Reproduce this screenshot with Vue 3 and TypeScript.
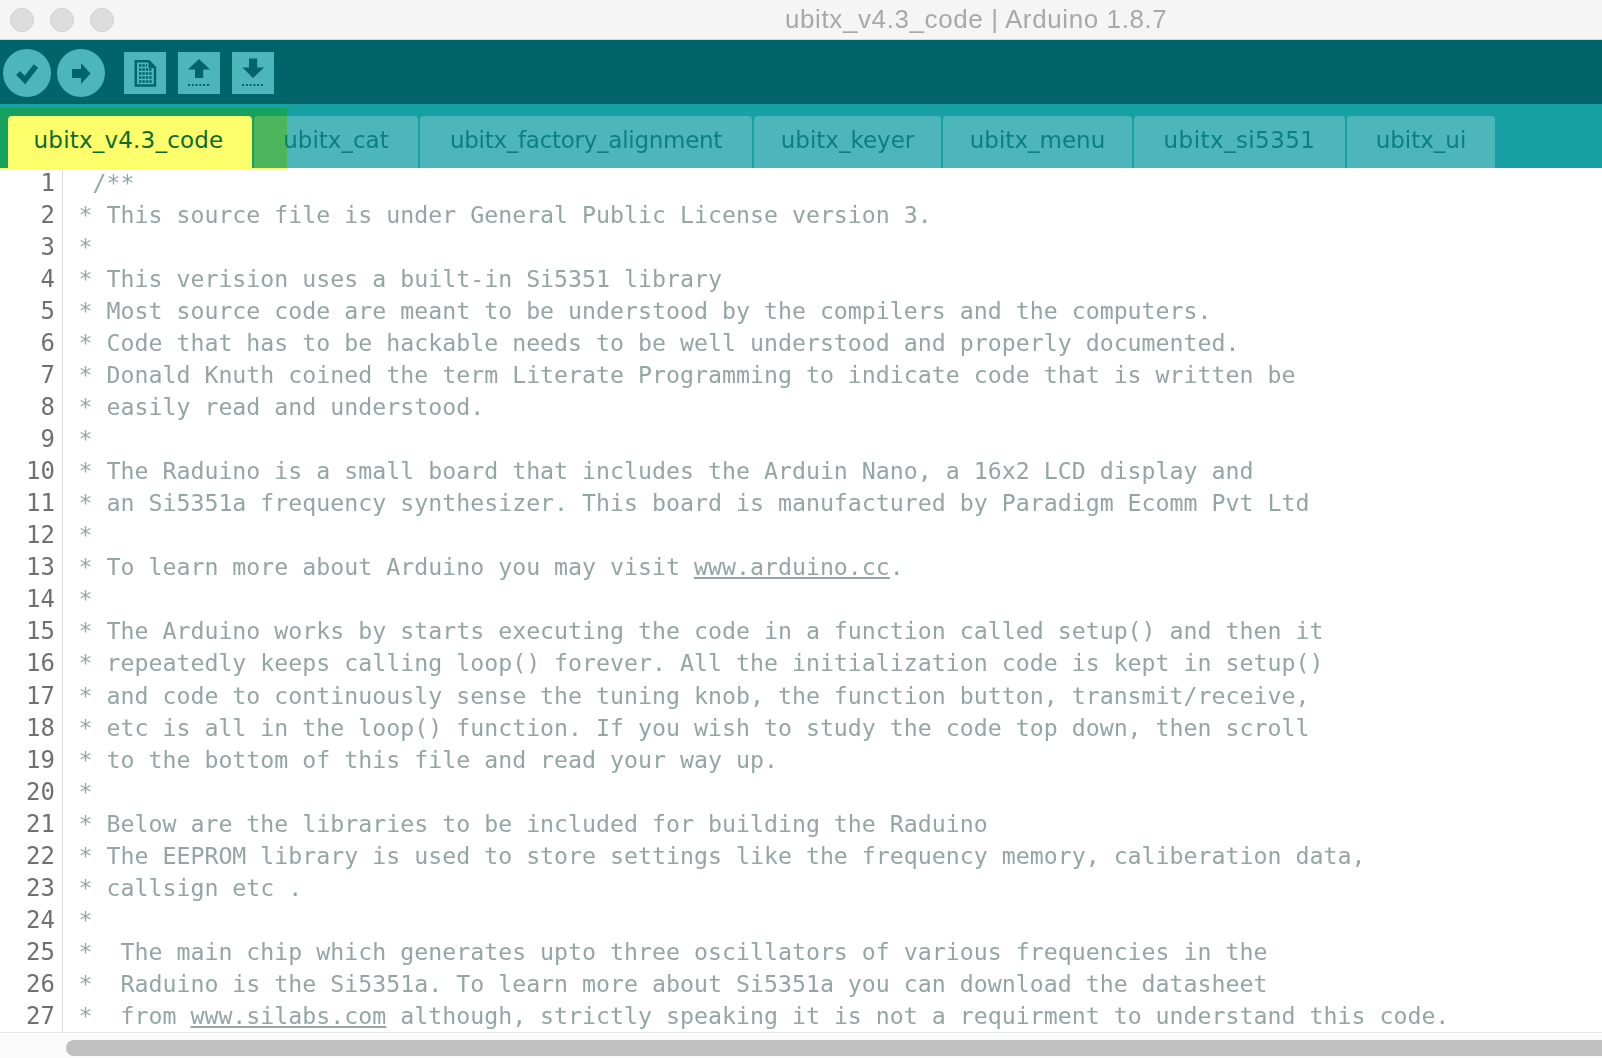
<script setup lang="ts">
interface Seg { t: string; link?: boolean }
interface Tab { name: string; width: number; spacing: number }
const raw: string[] = [
  ' /**',
  '* This source file is under General Public License version 3.',
  '*',
  '* This verision uses a built-in Si5351 library',
  '* Most source code are meant to be understood by the compilers and the computers.',
  '* Code that has to be hackable needs to be well understood and properly documented.',
  '* Donald Knuth coined the term Literate Programming to indicate code that is written be',
  '* easily read and understood.',
  '*',
  '* The Raduino is a small board that includes the Arduin Nano, a 16x2 LCD display and',
  '* an Si5351a frequency synthesizer. This board is manufactured by Paradigm Ecomm Pvt Ltd',
  '*',
  '* To learn more about Arduino you may visit [www.arduino.cc].',
  '*',
  '* The Arduino works by starts executing the code in a function called setup() and then it',
  '* repeatedly keeps calling loop() forever. All the initialization code is kept in setup()',
  '* and code to continuously sense the tuning knob, the function button, transmit/receive,',
  '* etc is all in the loop() function. If you wish to study the code top down, then scroll',
  '* to the bottom of this file and read your way up.',
  '*',
  '* Below are the libraries to be included for building the Raduino',
  '* The EEPROM library is used to store settings like the frequency memory, caliberation data,',
  '* callsign etc .',
  '*',
  '*  The main chip which generates upto three oscillators of various frequencies in the',
  '*  Raduino is the Si5351a. To learn more about Si5351a you can download the datasheet',
  '*  from [www.silabs.com] although, strictly speaking it is not a requirment to understand this code.',
]
const lines: Seg[][] = raw.map((l) =>
  l.split(/(\[[^\]]+\])/).filter(Boolean).map((p) =>
    p.startsWith('[') ? { t: p.slice(1, -1), link: true } : { t: p },
  ),
)
const tabs: Tab[] = [
  { name: 'ubitx_cat', width: 164, spacing: 0 },
  { name: 'ubitx_factory_alignment', width: 332, spacing: -0.27 },
  { name: 'ubitx_keyer', width: 187, spacing: 0 },
  { name: 'ubitx_menu', width: 189, spacing: 0 },
  { name: 'ubitx_si5351', width: 211, spacing: 0.43 },
  { name: 'ubitx_ui', width: 148, spacing: 0 },
]
</script>

<template>
  <div class="window">
    <header class="titlebar">
      <div class="lights"><i></i><i></i><i></i></div>
      <div class="title">ubitx_v4.3_code | Arduino 1.8.7</div>
    </header>
    <div class="toolbar">
      <button class="round" aria-label="Verify">
        <svg viewBox="0 0 48 48" width="48" height="48"><path d="M15 24 L22 31 L33 17" fill="none" stroke="#006468" stroke-width="5.5"/></svg>
      </button>
      <button class="round" aria-label="Upload">
        <svg viewBox="0 0 48 48" width="48" height="48"><path d="M15 20 H24 V14 L33.5 24.5 L24 35 V29 H15 Z" fill="#006468"/></svg>
      </button>
      <button class="square first" aria-label="New">
        <svg viewBox="0 0 42 42" width="42" height="42">
          <path d="M11.8 9.2 H25 L31 15.5 V33.5 H11.8 Z" fill="none" stroke="#006468" stroke-width="2.4"/>
          <path d="M24.5 8 V16 H32 Z" fill="#006468"/>
          <path d="M15 13.5 H23 M15 17.5 H28.5 M15 21.5 H28.5 M15 25.5 H28.5 M15 29.5 H28.5" stroke="#006468" stroke-width="2.4" stroke-dasharray="2.4 1"/>
        </svg>
      </button>
      <button class="square" aria-label="Open">
        <svg viewBox="0 0 42 42" width="42" height="42">
          <path d="M21 7 L32 17.5 H25.2 V26 H17 V17.5 H10 Z" fill="#006468"/>
          <path d="M10 33 H33" stroke="#006468" stroke-width="2" stroke-dasharray="2 1.8"/>
        </svg>
      </button>
      <button class="square" aria-label="Save">
        <svg viewBox="0 0 42 42" width="42" height="42">
          <path d="M17 6.5 H25.2 V15.5 H32 L21 26 L10.5 15.5 H17 Z" fill="#006468"/>
          <path d="M10 33 H33" stroke="#006468" stroke-width="2" stroke-dasharray="2 1.8"/>
        </svg>
      </button>
    </div>
    <nav class="tabbar">
      <div class="highlight"></div>
      <div class="tab active">ubitx_v4.3_code</div>
      <div
        v-for="t in tabs"
        :key="t.name"
        class="tab"
        :style="{ width: t.width + 'px', letterSpacing: t.spacing + 'px' }"
      >{{ t.name }}</div>
    </nav>
    <main class="editor">
      <div class="gutter">
        <div v-for="(_, i) in lines" :key="i" class="num">{{ i + 1 }}</div>
      </div>
      <div class="code">
        <div v-for="(line, i) in lines" :key="i" class="line"><template v-for="(s, j) in line" :key="j"><u v-if="s.link">{{ s.t }}</u><template v-else>{{ s.t }}</template></template></div>
      </div>
    </main>
    <div class="scrollrow"><div class="thumb"></div></div>
  </div>
</template>

<style>
html, body { margin: 0; background: #fff; overflow: hidden; }
</style>

<style scoped>
.window { width: 1602px; height: 1058px; display: flex; flex-direction: column; overflow: hidden; background: #fff; }

.titlebar { height: 39px; flex: none; display: flex; align-items: center; background: #f5f5f5; border-bottom: 1px solid #d3dcdc; }
.lights { display: flex; gap: 16px; padding-left: 10px; }
.lights i { width: 22px; height: 22px; border-radius: 50%; background: #dcdcdc; border: 1px solid #d2d2d2; }
.title { margin-left: 671px; font: 26px "Liberation Sans", Arial, sans-serif; letter-spacing: 0.6px; color: #a9a9a9; white-space: nowrap; }

.toolbar { height: 64px; flex: none; display: flex; align-items: center; background: #006468; padding-left: 3px; gap: 6px; }
.toolbar button { padding: 0; border: 0; background: #4db6ba; display: flex; }
.round { width: 48px; height: 48px; border-radius: 50%; margin-top: 2px; }
.square { width: 42px; height: 42px; margin-left: 6px; margin-top: 2px; }
.square.first { margin-left: 13px; }

.tabbar { position: relative; height: 64px; flex: none; display: flex; align-items: flex-end; gap: 2px; padding-left: 8px; background: #17a1a5; }
.highlight { position: absolute; left: 0; top: 4px; width: 287px; height: 62px; background: #ffff5c; mix-blend-mode: darken; z-index: 1; }
.tab { height: 52px; padding-bottom: 5px; display: flex; align-items: center; justify-content: center; box-sizing: border-box; border-radius: 4px 4px 0 0; background: #4db6ba; color: #0b7f84; font: 23px "DejaVu Sans", sans-serif; white-space: nowrap; }
.tab.active { position: relative; z-index: 2; height: 54px; margin-bottom: -2px; padding: 0 3px 7px 0; background: #ffff6c; color: #0c6a2e; width: 244px; letter-spacing: 0.2px; }

.editor { height: 864px; flex: none; display: flex; border-bottom: 1px solid #e8e8e8; background: #fff; }
.gutter { width: 63px; flex: none; box-sizing: border-box; border-right: 1px solid #dcdcdc; padding-right: 7px; text-align: right; color: #707070; }
.code { margin-top: -1px; padding-left: 15.5px; color: #95a5a6; flex: 1; }
.num, .line { height: 32.04px; line-height: 32px; font-family: "DejaVu Sans Mono", monospace; white-space: pre; }
.num { font-size: 24px; position: relative; top: -1px; }
.line { font-size: 23.24px; }

.scrollrow { flex: 1; background: #fbfbfb; padding: 7px 0 0 66px; }
.thumb { height: 16px; background: #c0c0c0; border-radius: 8px 0 0 8px; }
</style>
